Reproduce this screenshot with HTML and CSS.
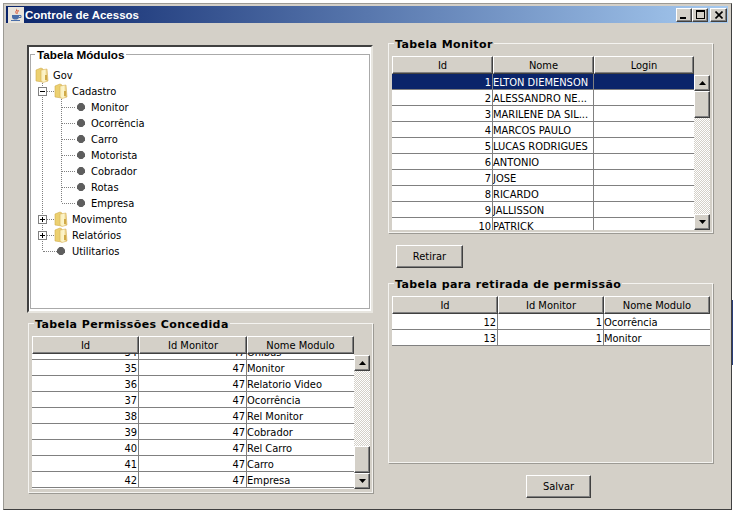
FILE: index.html
```html
<!DOCTYPE html>
<html lang="en">
<head>
    <meta charset="UTF-8">
    <meta name="viewport" content="width=device-width, initial-scale=1.0">
    <title>Controle de Acessos</title>
    <link rel="stylesheet" href="styles.css">
</head>
<body>
    <svg class="svg-defs" width="0" height="0">
        <defs>
            <linearGradient id="folderFill" x1="0" y1="0" x2="1" y2="0">
                <stop offset="0" stop-color="#f9eeb8"/>
                <stop offset="0.55" stop-color="#fdf5cc"/>
                <stop offset="1" stop-color="#dfba58"/>
            </linearGradient>
            <symbol id="folder" viewBox="0 0 14 16">
                <path d="M1 3 L6 1 L8 2 V15 L1 14 Z" fill="#ecd070" stroke="#d0ac4c" stroke-width="0.6"/>
                <path d="M6 3 L12 2 L13 14 L8 15.5 L6 14 Z" fill="url(#folderFill)" stroke="#d8b45c" stroke-width="0.6"/>
                <path d="M10 8 h2 v5 h-2 z" fill="#d0aa48"/>
            </symbol>
            <symbol id="leaf" viewBox="0 0 8 8">
                <path d="M2.5 0 h3 l2.5 2.5 v3 l-2.5 2.5 h-3 l-2.5 -2.5 v-3 z" fill="#5e5e5e"/>
            </symbol>
            <symbol id="arrow-up" viewBox="0 0 7 4">
                <path d="M3.5 0 L7 4 H0 Z" fill="#000"/>
            </symbol>
            <symbol id="arrow-down" viewBox="0 0 7 4">
                <path d="M0 0 H7 L3.5 4 Z" fill="#000"/>
            </symbol>
        </defs>
    </svg>

    <div class="window">
        <div class="titlebar">
            <svg class="java-icon" width="16" height="16" viewBox="0 0 16 16">
                <rect x="0" y="0" width="16" height="16" fill="#e8e4dc"/>
                <path d="M8 1 C10 3 6 4 8 7 C7 4 11 4 8 1 Z" fill="#d8401c"/>
                <path d="M10 3 C11 5 8 5 9 7" fill="none" stroke="#d8401c"/>
                <path d="M4 8 H11 V10 C11 12 9 12.5 7.5 12.5 C6 12.5 4 12 4 10 Z" fill="#4a6ea8"/>
                <path d="M11 8.5 H13 V10.5 H11" fill="none" stroke="#4a6ea8"/>
                <path d="M3 13.5 H12" stroke="#4a6ea8"/>
            </svg>
            <span class="title-text">Controle de Acessos</span>
            <div class="window-buttons">
                <button class="raised win-btn"><span class="min-glyph"></span></button>
                <button class="raised win-btn"><span class="max-glyph"></span></button>
                <button class="raised win-btn close-btn">
                    <svg width="8" height="8" viewBox="0 0 8 8"><path d="M0.5 0.5 L7.5 7.5 M7.5 0.5 L0.5 7.5" stroke="#000" stroke-width="1.6"/></svg>
                </button>
            </div>
        </div>

        <div class="content">
            <div class="col-left">
                <div class="tree-panel">
                    <fieldset class="tree-group">
                        <legend class="legend-tree">Tabela Módulos</legend>
                        <div class="tree-row root-row">
                            <svg class="folder-icon"><use href="#folder"/></svg>
                            <span class="root-label">Gov</span>
                        </div>
                        <ul class="tree-level-1">
                            <li class="branch">
                                <div class="tree-row">
                                    <span class="expander"><span class="bar-h"></span></span>
                                    <span class="dots-short"></span>
                                    <svg class="folder-icon"><use href="#folder"/></svg>
                                    <span class="folder-label">Cadastro</span>
                                </div>
                                <ul class="tree-level-2">
                                    <li class="tree-row branch"><span class="dots-leaf"></span><svg class="leaf-icon"><use href="#leaf"/></svg><span class="node-label">Monitor</span></li>
                                    <li class="tree-row branch"><span class="dots-leaf"></span><svg class="leaf-icon"><use href="#leaf"/></svg><span class="node-label">Ocorrência</span></li>
                                    <li class="tree-row branch"><span class="dots-leaf"></span><svg class="leaf-icon"><use href="#leaf"/></svg><span class="node-label">Carro</span></li>
                                    <li class="tree-row branch"><span class="dots-leaf"></span><svg class="leaf-icon"><use href="#leaf"/></svg><span class="node-label">Motorista</span></li>
                                    <li class="tree-row branch"><span class="dots-leaf"></span><svg class="leaf-icon"><use href="#leaf"/></svg><span class="node-label">Cobrador</span></li>
                                    <li class="tree-row branch"><span class="dots-leaf"></span><svg class="leaf-icon"><use href="#leaf"/></svg><span class="node-label">Rotas</span></li>
                                    <li class="tree-row last-branch"><span class="dots-leaf"></span><svg class="leaf-icon"><use href="#leaf"/></svg><span class="node-label">Empresa</span></li>
                                </ul>
                            </li>
                            <li class="tree-row branch">
                                <span class="expander"><span class="bar-h"></span><span class="bar-v"></span></span>
                                <span class="dots-short"></span>
                                <svg class="folder-icon"><use href="#folder"/></svg>
                                <span class="folder-label">Movimento</span>
                            </li>
                            <li class="tree-row branch">
                                <span class="expander"><span class="bar-h"></span><span class="bar-v"></span></span>
                                <span class="dots-short"></span>
                                <svg class="folder-icon"><use href="#folder"/></svg>
                                <span class="folder-label">Relatórios</span>
                            </li>
                            <li class="tree-row last-branch root-leaf">
                                <span class="dots-long"></span>
                                <svg class="leaf-icon"><use href="#leaf"/></svg>
                                <span class="node-label">Utilitarios</span>
                            </li>
                        </ul>
                    </fieldset>
                </div>

                <fieldset class="group group-granted">
                    <legend>Tabela Permissões Concedida</legend>
                    <div class="scroll-pane">
                        <div class="table-view">
                            <table class="grid head-grid cols-granted">
                                <colgroup><col class="c1"><col class="c2"><col class="c3"></colgroup>
                                <tr><th>Id</th><th>Id Monitor</th><th>Nome Modulo</th></tr>
                            </table>
                            <div class="grid-body body-granted">
                                <table class="grid cols-granted scrolled">
                                    <colgroup><col class="c1"><col class="c2"><col class="c3"></colgroup>
                                    <tr><td class="num">34</td><td class="num">47</td><td>Ônibus</td></tr>
                                    <tr><td class="num">35</td><td class="num">47</td><td>Monitor</td></tr>
                                    <tr><td class="num">36</td><td class="num">47</td><td>Relatorio Video</td></tr>
                                    <tr><td class="num">37</td><td class="num">47</td><td>Ocorrência</td></tr>
                                    <tr><td class="num">38</td><td class="num">47</td><td>Rel Monitor</td></tr>
                                    <tr><td class="num">39</td><td class="num">47</td><td>Cobrador</td></tr>
                                    <tr><td class="num">40</td><td class="num">47</td><td>Rel Carro</td></tr>
                                    <tr><td class="num">41</td><td class="num">47</td><td>Carro</td></tr>
                                    <tr><td class="num">42</td><td class="num">47</td><td>Empresa</td></tr>
                                </table>
                            </div>
                        </div>
                        <div class="vscroll">
                            <button class="raised sb-btn"><svg width="7" height="4"><use href="#arrow-up"/></svg></button>
                            <div class="sb-track">
                                <div class="sb-spacer-end"></div>
                                <div class="raised sb-thumb"></div>
                            </div>
                            <button class="raised sb-btn"><svg width="7" height="4"><use href="#arrow-down"/></svg></button>
                        </div>
                    </div>
                </fieldset>
            </div>

            <div class="col-right">
                <fieldset class="group group-monitor">
                    <legend>Tabela Monitor</legend>
                    <div class="scroll-pane">
                        <div class="table-view">
                            <table class="grid head-grid cols-monitor">
                                <colgroup><col class="c1"><col class="c2"><col class="c3"></colgroup>
                                <tr><th>Id</th><th>Nome</th><th>Login</th></tr>
                            </table>
                            <div class="grid-body body-monitor">
                                <table class="grid cols-monitor">
                                    <colgroup><col class="c1"><col class="c2"><col class="c3"></colgroup>
                                    <tr class="selected"><td class="num">1</td><td>ELTON DIEMENSON</td><td></td></tr>
                                    <tr><td class="num">2</td><td>ALESSANDRO NE...</td><td></td></tr>
                                    <tr><td class="num">3</td><td>MARILENE DA SIL...</td><td></td></tr>
                                    <tr><td class="num">4</td><td>MARCOS PAULO</td><td></td></tr>
                                    <tr><td class="num">5</td><td>LUCAS RODRIGUES</td><td></td></tr>
                                    <tr><td class="num">6</td><td>ANTONIO</td><td></td></tr>
                                    <tr><td class="num">7</td><td>JOSE</td><td></td></tr>
                                    <tr><td class="num">8</td><td>RICARDO</td><td></td></tr>
                                    <tr><td class="num">9</td><td>JALLISSON</td><td></td></tr>
                                    <tr><td class="num">10</td><td>PATRICK</td><td></td></tr>
                                </table>
                            </div>
                        </div>
                        <div class="vscroll">
                            <button class="raised sb-btn"><svg width="7" height="4"><use href="#arrow-up"/></svg></button>
                            <div class="sb-track">
                                <div class="raised sb-thumb"></div>
                            </div>
                            <button class="raised sb-btn"><svg width="7" height="4"><use href="#arrow-down"/></svg></button>
                        </div>
                    </div>
                </fieldset>

                <button class="raised action-btn btn-retirar">Retirar</button>

                <fieldset class="group group-removal">
                    <legend>Tabela para retirada de permissão</legend>
                    <table class="grid head-grid cols-removal">
                        <colgroup><col class="c1"><col class="c2"><col class="c3"></colgroup>
                        <tr><th>Id</th><th>Id Monitor</th><th>Nome Modulo</th></tr>
                    </table>
                    <table class="grid cols-removal">
                        <colgroup><col class="c1"><col class="c2"><col class="c3"></colgroup>
                        <tr><td class="num">12</td><td class="num">1</td><td>Ocorrência</td></tr>
                        <tr><td class="num">13</td><td class="num">1</td><td>Monitor</td></tr>
                    </table>
                </fieldset>

                <button class="raised action-btn btn-salvar">Salvar</button>
            </div>
        </div>
    </div>
</body>
</html>
```

FILE: styles.css
```css
body {
    margin: 0;
    /* sliver of the desktop showing behind the window */
    background: linear-gradient(#2a3f7a, #2a3f7a) 732px 300px / 1px 65px no-repeat #fff;
    font-family: "DejaVu Sans Condensed", "DejaVu Sans", sans-serif;
    font-stretch: condensed;
    font-size: 11px;
    color: #000;
    overflow: hidden;
}

.svg-defs {
    display: block;
    height: 0;
}

.window {
    box-sizing: border-box;
    width: 729px;
    height: 507px;
    margin: 3px 0 0 3px;
    padding: 2px 3px 2px 2px;
    background-color: #d4d0c8;
    border: 1px solid #9c9a94;
    border-right-color: #404040;
    border-bottom-color: #404040;
}

/* Title bar */
.titlebar {
    display: flex;
    align-items: center;
    height: 17px;
    padding: 0 1px 0 2px;
    background: linear-gradient(to right, #0a246a, #a6caf0);
}

.java-icon {
    flex: none;
    margin-right: 1px;
}

.title-text {
    color: #fff;
    font-family: "Liberation Sans", Arial, sans-serif;
    font-stretch: normal;
    font-weight: bold;
    font-size: 11.5px;
}

.window-buttons {
    display: flex;
    margin-left: auto;
}

/* windows classic bevel */
.raised {
    box-sizing: border-box;
    background-color: #d4d0c8;
    border: 1px solid;
    border-color: #fff #404040 #404040 #fff;
    box-shadow: inset -1px -1px #808080;
    padding: 0;
}

.win-btn {
    display: flex;
    align-items: center;
    justify-content: center;
    width: 16px;
    height: 14px;
}

.close-btn {
    width: 17px;
    margin-left: 2px;
}

.min-glyph {
    width: 6px;
    height: 2px;
    background-color: #000;
    margin-top: 6px;
    margin-right: 2px;
}

.max-glyph {
    box-sizing: border-box;
    width: 9px;
    height: 9px;
    border: 1px solid #000;
    border-top-width: 2px;
}

/* Main layout */
.content {
    display: grid;
    grid-template-columns: 346px 325px;
    column-gap: 15px;
    padding: 11px 0 0 21px;
}

.col-left,
.col-right {
    display: flex;
    flex-direction: column;
}

/* Titled groups */
fieldset {
    box-sizing: border-box;
    margin: 0;
    min-width: 0;
}

legend {
    padding: 4px 1px 0;
    margin-left: 2px;
    font-family: "DejaVu Sans", Verdana, sans-serif;
    font-stretch: normal;
    font-weight: bold;
    font-size: 11px;
    line-height: 14px;
    letter-spacing: 0.4px;
}

.group {
    padding: 4px 2px 0 3px;
    border: 1px solid #f4f3f0;
    box-shadow: 1px 1px #9c9a94;
}

.group-granted {
    width: 345px;
    height: 179px;
    margin-left: 1px;
    margin-top: 1px;
}

.group-monitor {
    height: 199px;
}

.group-removal {
    height: 189px;
    margin-top: 6px;
}

/* Tree */
.tree-panel {
    box-sizing: border-box;
    height: 268px;
    margin-top: 11px;
    padding: 0 1px 2px 1px;
    background-color: #fff;
    border: 2px solid;
    border-color: #404040 #e8e6e0 #e8e6e0 #404040;
}

.tree-group {
    height: 100%;
    padding: 0 0 0 4px;
    border: 1px solid #aaa;
}

.legend-tree {
    margin-left: 0;
    padding: 1px 2px 0;
    font-family: "Liberation Sans", Arial, sans-serif;
    font-size: 11.7px;
    letter-spacing: 0;
    background-color: #fff;
}

.tree-row {
    display: flex;
    align-items: center;
    height: 16px;
}

.root-row {
    margin-top: 5px;
}

.folder-icon {
    flex: none;
    width: 14px;
    height: 16px;
}

.leaf-icon {
    flex: none;
    width: 8px;
    height: 8px;
}

.root-label {
    margin-left: 4px;
}

.folder-label {
    margin-left: 4px;
}

.node-label {
    margin-left: 6px;
}

.root-leaf .node-label {
    margin-left: 7px;
}

ul {
    list-style: none;
    margin: 0;
    padding: 0;
}

.tree-level-1 {
    margin-left: 7px;
}

.tree-level-2 {
    margin-left: 19px;
}

/* vertical dotted guide of a tree level, the last row stops at its middle */
.branch {
    background: repeating-linear-gradient(to bottom, #808080 0 1px, transparent 1px 2px) 0 0 / 1px 100% no-repeat;
}

.last-branch {
    background: repeating-linear-gradient(to bottom, #808080 0 1px, transparent 1px 2px) 0 0 / 1px 8px no-repeat;
}

.expander {
    box-sizing: border-box;
    flex: none;
    display: flex;
    align-items: center;
    justify-content: center;
    position: relative;
    width: 9px;
    height: 9px;
    margin-left: -4px;
    background-color: #fff;
    border: 1px solid #808080;
}

.bar-h {
    width: 5px;
    height: 1px;
    background-color: #000;
}

.bar-v {
    position: absolute;
    left: 3px;
    top: 1px;
    width: 1px;
    height: 5px;
    background-color: #000;
}

.dots-short {
    flex: none;
    width: 7px;
    border-top: 1px dotted #808080;
}

.dots-leaf {
    flex: none;
    width: 13px;
    margin: 0 2px 0 1px;
    border-top: 1px dotted #808080;
}

.dots-long {
    flex: none;
    width: 14px;
    margin-left: 1px;
    border-top: 1px dotted #808080;
}

/* Tables */
.scroll-pane {
    display: flex;
}

.table-view {
    flex: 1;
    min-width: 0;
}

.grid {
    width: 100%;
    table-layout: fixed;
    border-collapse: separate;
    border-spacing: 0;
    background-color: #fff;
}

.grid th,
.grid td {
    box-sizing: border-box;
    font-weight: normal;
    white-space: nowrap;
    overflow: hidden;
}

.grid td {
    height: 16px;
    padding: 1px 1px 0 0;
    border-right: 1px solid #808080;
    border-bottom: 1px solid #808080;
}

.grid td:last-child {
    border-right: 0;
}

.grid th {
    height: 18px;
    padding: 0 1px;
    background-color: #d4d0c8;
    text-align: center;
    border: 1px solid;
    border-color: #fff #404040 #404040 #fff;
    box-shadow: inset -1px -1px #808080;
}

.grid .num {
    text-align: right;
}

.selected td {
    background-color: #0a246a;
    color: #fff;
}

.grid-body {
    overflow: hidden;
    background-color: #fff;
}

.body-granted {
    height: 135px;
}

.body-monitor {
    height: 156px;
}

.scrolled {
    margin-top: -10px;
}

.cols-granted .c1 { width: 107px; }
.cols-granted .c2 { width: 108px; }
.cols-monitor .c1 { width: 101px; }
.cols-monitor .c2 { width: 101px; }
.cols-removal .c1 { width: 106px; }
.cols-removal .c2 { width: 106px; }

/* Scrollbars */
.vscroll {
    flex: none;
    display: flex;
    flex-direction: column;
    width: 16px;
    margin-top: 19px;
}

.sb-btn {
    flex: none;
    display: flex;
    align-items: center;
    justify-content: center;
    height: 16px;
}

.sb-track {
    flex: 1;
    display: flex;
    flex-direction: column;
    background: repeating-conic-gradient(#fff 0 25%, #d4d0c8 0 50%) 0 0 / 2px 2px;
}

.sb-spacer-end {
    flex: 1;
}

.sb-thumb {
    flex: none;
    height: 27px;
}

/* Buttons */
.action-btn {
    font-family: inherit;
    font-stretch: condensed;
    font-size: 11px;
    color: #000;
}

.btn-retirar {
    width: 67px;
    height: 23px;
    margin: 12px 0 0 8px;
}

.btn-salvar {
    width: 65px;
    height: 23px;
    margin: 12px 0 0 138px;
}
```
